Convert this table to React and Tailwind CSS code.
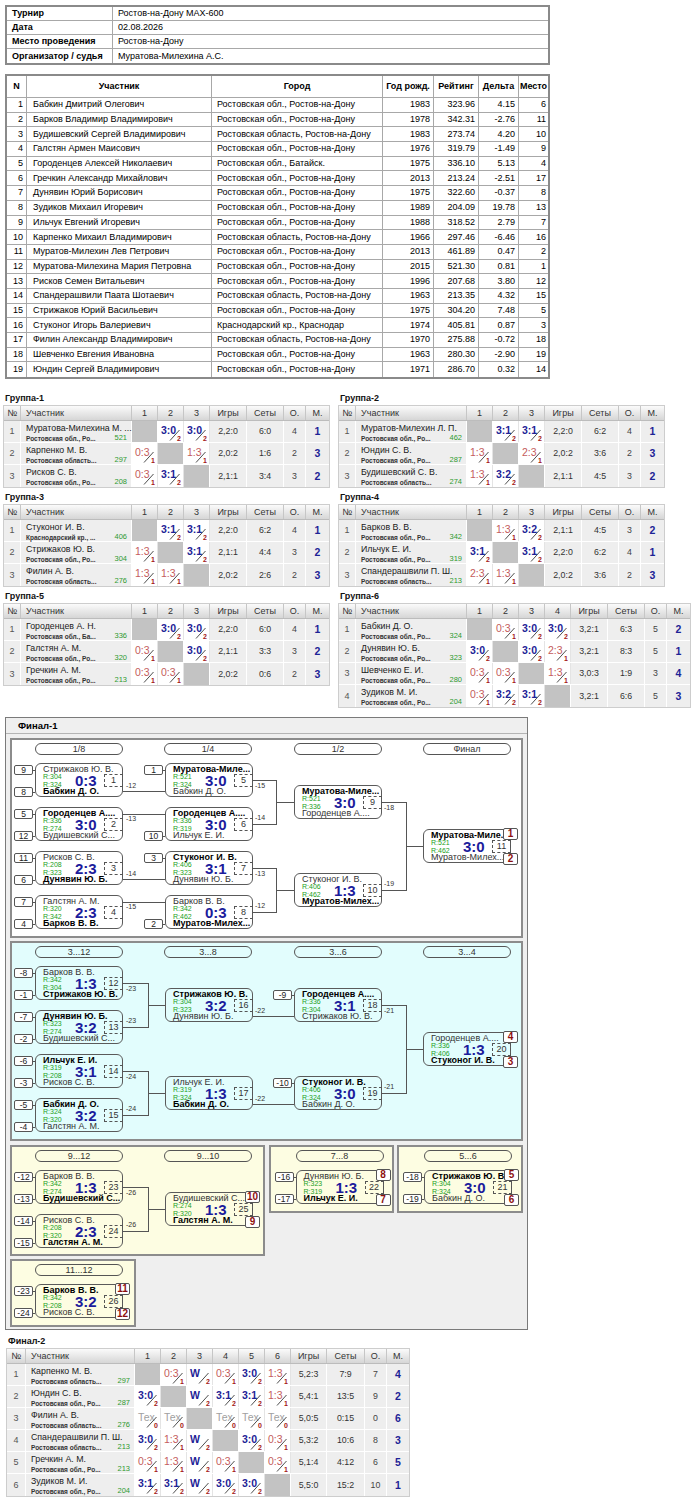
import React from 'react';

const players = [
  [1, 'Бабкин Дмитрий Олегович', 'Ростовская обл., Ростов-на-Дону', 1983, '323.96', '4.15', 6],
  [2, 'Барков Владимир Владимирович', 'Ростовская обл., Ростов-на-Дону', 1978, '342.31', '-2.76', 11],
  [3, 'Будишевский Сергей Владимирович', 'Ростовская область, Ростов-на-Дону', 1983, '273.74', '4.20', 10],
  [4, 'Галстян Армен Маисович', 'Ростовская обл., Ростов-на-Дону', 1976, '319.79', '-1.49', 9],
  [5, 'Городенцев Алексей Николаевич', 'Ростовская обл., Батайск.', 1975, '336.10', '5.13', 4],
  [6, 'Гречкин Александр Михайлович', 'Ростовская обл., Ростов-на-Дону', 2013, '213.24', '-2.51', 17],
  [7, 'Дунявин Юрий Борисович', 'Ростовская обл., Ростов-на-Дону', 1975, '322.60', '-0.37', 8],
  [8, 'Зудиков Михаил Игоревич', 'Ростовская обл., Ростов-на-Дону', 1989, '204.09', '19.78', 13],
  [9, 'Ильчук Евгений Игоревич', 'Ростовская обл., Ростов-на-Дону', 1988, '318.52', '2.79', 7],
  [10, 'Карпенко Михаил Владимирович', 'Ростовская область, Ростов-на-Дону', 1966, '297.46', '-6.46', 16],
  [11, 'Муратов-Милехин Лев Петрович', 'Ростовская обл., Ростов-на-Дону', 2013, '461.89', '0.47', 2],
  [12, 'Муратова-Милехина Мария Петровна', 'Ростовская обл., Ростов-на-Дону', 2015, '521.30', '0.81', 1],
  [13, 'Рисков Семен Витальевич', 'Ростовская обл., Ростов-на-Дону', 1996, '207.68', '3.80', 12],
  [14, 'Спандерашвили Паата Шотаевич', 'Ростовская область, Ростов-на-Дону', 1963, '213.35', '4.32', 15],
  [15, 'Стрижаков Юрий Васильевич', 'Ростовская обл., Ростов-на-Дону', 1975, '304.20', '7.48', 5],
  [16, 'Стуконог Игорь Валериевич', 'Краснодарский кр., Краснодар', 1974, '405.81', '0.87', 3],
  [17, 'Филин Александр Владимирович', 'Ростовская область, Ростов-на-Дону', 1970, '275.88', '-0.72', 18],
  [18, 'Шевченко Евгения Ивановна', 'Ростовская обл., Ростов-на-Дону', 1963, '280.30', '-2.90', 19],
  [19, 'Юндин Сергей Владимирович', 'Ростовская обл., Ростов-на-Дону', 1971, '286.70', '0.32', 14],
];

const RO = 'Ростовская обл., Ро...';
const RA = 'Ростовская область...';

const groups = [
  { t: 'Группа-1', n: 3, rows: [
    ['Муратова-Милехина М. ...', RO, 521, ['x', '3:0/2', '3:0/2'], '2,2:0', '6:0', 4, 1],
    ['Карпенко М. В.', RA, 297, ['0:3/1', 'x', '1:3/1'], '2,0:2', '1:6', 2, 3],
    ['Рисков С. В.', RO, 208, ['0:3/1', '3:1/2', 'x'], '2,1:1', '3:4', 3, 2],
  ] },
  { t: 'Группа-2', n: 3, rows: [
    ['Муратов-Милехин Л. П.', RO, 462, ['x', '3:1/2', '3:1/2'], '2,2:0', '6:2', 4, 1],
    ['Юндин С. В.', RO, 287, ['1:3/1', 'x', '2:3/1'], '2,0:2', '3:6', 2, 3],
    ['Будишевский С. В.', RA, 274, ['1:3/1', '3:2/2', 'x'], '2,1:1', '4:5', 3, 2],
  ] },
  { t: 'Группа-3', n: 3, rows: [
    ['Стуконог И. В.', 'Краснодарский кр., ...', 406, ['x', '3:1/2', '3:1/2'], '2,2:0', '6:2', 4, 1],
    ['Стрижаков Ю. В.', RO, 304, ['1:3/1', 'x', '3:1/2'], '2,1:1', '4:4', 3, 2],
    ['Филин А. В.', RA, 276, ['1:3/1', '1:3/1', 'x'], '2,0:2', '2:6', 2, 3],
  ] },
  { t: 'Группа-4', n: 3, rows: [
    ['Барков В. В.', RO, 342, ['x', '1:3/1', '3:2/2'], '2,1:1', '4:5', 3, 2],
    ['Ильчук Е. И.', RO, 319, ['3:1/2', 'x', '3:1/2'], '2,2:0', '6:2', 4, 1],
    ['Спандерашвили П. Ш.', RA, 213, ['2:3/1', '1:3/1', 'x'], '2,0:2', '3:6', 2, 3],
  ] },
  { t: 'Группа-5', n: 3, rows: [
    ['Городенцев А. Н.', 'Ростовская обл., Ба...', 336, ['x', '3:0/2', '3:0/2'], '2,2:0', '6:0', 4, 1],
    ['Галстян А. М.', RO, 320, ['0:3/1', 'x', '3:0/2'], '2,1:1', '3:3', 3, 2],
    ['Гречкин А. М.', RO, 213, ['0:3/1', '0:3/1', 'x'], '2,0:2', '0:6', 2, 3],
  ] },
  { t: 'Группа-6', n: 4, rows: [
    ['Бабкин Д. О.', RO, 324, ['x', '0:3/1', '3:0/2', '3:0/2'], '3,2:1', '6:3', 5, 2],
    ['Дунявин Ю. Б.', RO, 323, ['3:0/2', 'x', '3:0/2', '2:3/1'], '3,2:1', '8:3', 5, 1],
    ['Шевченко Е. И.', RO, 280, ['0:3/1', '0:3/1', 'x', '1:3/1'], '3,0:3', '1:9', 3, 4],
    ['Зудиков М. И.', RO, 204, ['0:3/1', '3:2/2', '3:1/2', 'x'], '3,2:1', '6:6', 5, 3],
  ] },
];

const final2 = { t: 'Финал-2', n: 6, rows: [
  ['Карпенко М. В.', RA, 297, ['x', '0:3/1', 'W/2', '0:3/1', '3:0/2', '1:3/1'], '5,2:3', '7:9', 7, 4],
  ['Юндин С. В.', RO, 287, ['3:0/2', 'x', 'W/2', '3:1/2', '3:1/2', '1:3/1'], '5,4:1', '13:5', 9, 2],
  ['Филин А. В.', RA, 276, ['T/0', 'T/0', 'x', 'T/0', 'T/0', 'T/0'], '5,0:5', '0:15', 0, 6],
  ['Спандерашвили П. Ш.', RA, 213, ['3:0/2', '1:3/1', 'W/2', 'x', '3:0/2', '0:3/1'], '5,3:2', '10:6', 8, 3],
  ['Гречкин А. М.', RO, 213, ['0:3/1', '1:3/1', 'W/2', '0:3/1', 'x', '0:3/1'], '5,1:4', '4:12', 6, 5],
  ['Зудиков М. И.', RO, 204, ['3:1/2', '3:1/2', 'W/2', '3:0/2', '3:0/2', 'x'], '5,5:0', '15:2', 10, 1],
] };

const GCOLS = {
  3: 'grid-cols-[17px_111px_26px_26px_26px_37px_37px_22px_23px]',
  4: 'grid-cols-[17px_111px_26px_26px_26px_26px_37px_37px_22px_23px]',
  6: 'grid-cols-[19px_109px_26px_26px_26px_26px_26px_26px_36px_38px_22px_22px]',
};

const PCOLS = 'grid-cols-[20px_185px_171px_51px_45px_40px_29px]';

// сетка Финал-1, координаты в пикселях страницы
const panels = {
  main: {
    ox: 12, oy: 740,
    heads: [[35, 743, '1/8'], [164, 743, '1/4'], [294, 743, '1/2'], [423, 743, 'Финал']],
    matches: [
      { x: 35, y: 763, a: 'Стрижаков Ю. В.', b: 'Бабкин Д. О.', w: 2, ra: 304, rb: 324, s: '0:3', n: 1, sa: '9', sb: '8' },
      { x: 35, y: 807, a: 'Городенцев А....', b: 'Будишевский С...', w: 1, ra: 336, rb: 274, s: '3:0', n: 2, sa: '5', sb: '12' },
      { x: 35, y: 851, a: 'Рисков С. В.', b: 'Дунявин Ю. Б.', w: 2, ra: 208, rb: 323, s: '2:3', n: 3, sa: '11', sb: '6' },
      { x: 35, y: 895, a: 'Галстян А. М.', b: 'Барков В. В.', w: 2, ra: 320, rb: 342, s: '2:3', n: 4, sa: '7', sb: '4' },
      { x: 165, y: 763, a: 'Муратова-Миле...', b: 'Бабкин Д. О.', w: 1, ra: 521, rb: 324, s: '3:0', n: 5, sa: '1' },
      { x: 165, y: 807, a: 'Городенцев А....', b: 'Ильчук Е. И.', w: 1, ra: 336, rb: 319, s: '3:0', n: 6, sb: '10' },
      { x: 165, y: 851, a: 'Стуконог И. В.', b: 'Дунявин Ю. Б.', w: 1, ra: 406, rb: 323, s: '3:1', n: 7, sa: '3' },
      { x: 165, y: 895, a: 'Барков В. В.', b: 'Муратов-Милех...', w: 2, ra: 342, rb: 462, s: '0:3', n: 8, sb: '2' },
      { x: 294, y: 785, a: 'Муратова-Миле...', b: 'Городенцев А....', w: 1, ra: 521, rb: 336, s: '3:0', n: 9 },
      { x: 294, y: 873, a: 'Стуконог И. В.', b: 'Муратов-Милех...', w: 2, ra: 406, rb: 462, s: '1:3', n: 10 },
      { x: 423, y: 829, a: 'Муратова-Миле...', b: 'Муратов-Милех...', w: 1, ra: 521, rb: 462, s: '3:0', n: 11, pa: '1', pb: '2' },
    ],
    lines: [
      'M123 791H165', 'M123 814H165', 'M123 879H165', 'M123 902H165',
      'M253 780H276V824H253', 'M276 802H294',
      'M253 868H276V912H253', 'M276 890H294',
      'M382 802H406V890H382', 'M406 846H423',
    ],
    labels: [
      [126, 786, '-12'], [126, 819, '-13'], [126, 874, '-14'], [126, 907, '-15'],
      [255, 786, '-15'], [255, 818, '-14'], [255, 874, '-13'], [255, 906, '-12'],
      [384, 808, '-18'], [384, 884, '-19'],
    ],
  },
  cons: {
    ox: 12, oy: 943,
    heads: [[35, 946, '3...12'], [164, 946, '3...8'], [294, 946, '3...6'], [423, 946, '3...4']],
    matches: [
      { x: 35, y: 966, a: 'Барков В. В.', b: 'Стрижаков Ю. В.', w: 2, ra: 342, rb: 304, s: '1:3', n: 12, sa: '-8', sb: '-1' },
      { x: 35, y: 1010, a: 'Дунявин Ю. Б.', b: 'Будишевский С...', w: 1, ra: 323, rb: 274, s: '3:2', n: 13, sa: '-7', sb: '-2' },
      { x: 35, y: 1054, a: 'Ильчук Е. И.', b: 'Рисков С. В.', w: 1, ra: 319, rb: 208, s: '3:1', n: 14, sa: '-6', sb: '-3' },
      { x: 35, y: 1098, a: 'Бабкин Д. О.', b: 'Галстян А. М.', w: 1, ra: 324, rb: 320, s: '3:2', n: 15, sa: '-5', sb: '-4' },
      { x: 165, y: 988, a: 'Стрижаков Ю. В.', b: 'Дунявин Ю. Б.', w: 1, ra: 304, rb: 323, s: '3:2', n: 16 },
      { x: 165, y: 1076, a: 'Ильчук Е. И.', b: 'Бабкин Д. О.', w: 2, ra: 319, rb: 324, s: '1:3', n: 17 },
      { x: 294, y: 988, a: 'Городенцев А....', b: 'Стрижаков Ю. В.', w: 1, ra: 336, rb: 304, s: '3:1', n: 18, sa: '-9' },
      { x: 294, y: 1076, a: 'Стуконог И. В.', b: 'Бабкин Д. О.', w: 1, ra: 406, rb: 324, s: '3:0', n: 19, sa: '-10' },
      { x: 423, y: 1032, a: 'Городенцев А....', b: 'Стуконог И. В.', w: 2, ra: 336, rb: 406, s: '1:3', n: 20, pa: '4', pb: '3' },
    ],
    lines: [
      'M123 983H148V1027H123', 'M148 1005H165',
      'M123 1071H148V1115H123', 'M148 1093H165',
      'M253 1016H294', 'M253 1104H294',
      'M382 1005H406V1093H382', 'M406 1049H423',
    ],
    labels: [
      [126, 989, '-23'], [126, 1021, '-23'], [126, 1077, '-24'], [126, 1109, '-24'],
      [255, 1011, '-22'], [255, 1099, '-22'], [384, 1011, '-21'], [384, 1087, '-21'],
    ],
  },
  p912: {
    ox: 12, oy: 1147,
    heads: [[35, 1150, '9...12'], [164, 1150, '9...10']],
    matches: [
      { x: 35, y: 1170, a: 'Барков В. В.', b: 'Будишевский С...', w: 2, ra: 342, rb: 274, s: '1:3', n: 23, sa: '-12', sb: '-13' },
      { x: 35, y: 1214, a: 'Рисков С. В.', b: 'Галстян А. М.', w: 2, ra: 208, rb: 320, s: '2:3', n: 24, sa: '-14', sb: '-15' },
      { x: 165, y: 1192, a: 'Будишевский С...', b: 'Галстян А. М.', w: 2, ra: 274, rb: 320, s: '1:3', n: 25, pa: '10', pb: '9' },
    ],
    lines: ['M123 1187H148V1231H123', 'M148 1209H165'],
    labels: [[126, 1193, '-26'], [126, 1225, '-26']],
  },
  p78: {
    ox: 270, oy: 1147,
    heads: [[295, 1150, '7...8']],
    matches: [
      { x: 295, y: 1170, a: 'Дунявин Ю. Б.', b: 'Ильчук Е. И.', w: 2, ra: 323, rb: 319, s: '1:3', n: 22, sa: '-16', sb: '-17', pa: '8', pb: '7' },
    ],
    lines: [],
    labels: [],
  },
  p56: {
    ox: 399, oy: 1147,
    heads: [[424, 1150, '5...6']],
    matches: [
      { x: 424, y: 1170, a: 'Стрижаков Ю. В.', b: 'Бабкин Д. О.', w: 1, ra: 304, rb: 324, s: '3:0', n: 21, sa: '-18', sb: '-19', pa: '5', pb: '6' },
    ],
    lines: [],
    labels: [],
  },
  p1112: {
    ox: 12, oy: 1261,
    heads: [[35, 1264, '11...12']],
    matches: [
      { x: 35, y: 1284, a: 'Барков В. В.', b: 'Рисков С. В.', w: 1, ra: 342, rb: 208, s: '3:2', n: 26, sa: '-23', sb: '-24', pa: '11', pb: '12' },
    ],
    lines: [],
    labels: [],
  },
};

function InfoTable() {
  const rows = [
    ['Турнир', 'Ростов-на-Дону MAX-600'],
    ['Дата', '02.08.2026'],
    ['Место проведения', 'Ростов-на-Дону'],
    ['Организатор / судья', 'Муратова-Милехина А.С.'],
  ];
  return (
    <div className="ml-[5px] mt-[5px] w-[545px] border-2 border-[#8a8a8a]">
      {rows.map(([k, v], i) => (
        <div key={k} className={`grid grid-cols-[106px_1fr] h-[14px] ${i < 3 ? 'border-b border-[#a8a8a8]' : ''}`}>
          <div className="border-r border-[#a8a8a8] pl-[5px] flex items-center font-bold">{k}</div>
          <div className="pl-[5px] flex items-center">{v}</div>
        </div>
      ))}
    </div>
  );
}

function PlayersTable() {
  const heads = ['N', 'Участник', 'Город', 'Год рожд.', 'Рейтинг', 'Дельта', 'Место'];
  return (
    <div className="ml-[5px] mt-[9px] w-[545px] border-2 border-[#8a8a8a]">
      <div className={`grid ${PCOLS} h-[22px] border-b border-[#a8a8a8] font-bold`}>
        {heads.map((h, i) => (
          <div key={h} className={`flex items-center justify-center ${i < 6 ? 'border-r border-[#a8a8a8]' : ''}`}>{h}</div>
        ))}
      </div>
      {players.map((p, i) => (
        <div key={p[0]} className={`grid ${PCOLS} h-[14.7px] ${i < 18 ? 'border-b border-[#a8a8a8]' : ''}`}>
          <div className="border-r border-[#a8a8a8] flex items-center justify-end pr-[3px]">{p[0]}</div>
          <div className="border-r border-[#a8a8a8] flex items-center pl-[6px] whitespace-nowrap">{p[1]}</div>
          <div className="border-r border-[#a8a8a8] flex items-center pl-[5px] whitespace-nowrap">{p[2]}</div>
          <div className="border-r border-[#a8a8a8] flex items-center justify-end pr-[3px]">{p[3]}</div>
          <div className="border-r border-[#a8a8a8] flex items-center justify-end pr-[3px]">{p[4]}</div>
          <div className="border-r border-[#a8a8a8] flex items-center justify-end pr-[3px]">{p[5]}</div>
          <div className="flex items-center justify-end pr-[2px]">{p[6]}</div>
        </div>
      ))}
    </div>
  );
}

function ScoreCell({ v }) {
  if (v === 'x') return <div className="bg-[#c3c3c3] border-r border-white" />;
  const [s, p] = v.split('/');
  const tex = s === 'T';
  const win = p === '2';
  const color = tex ? 'text-[#a0a0a0]' : win ? 'text-[#1d2396] font-bold' : 'text-[#c45c5c]';
  return (
    <div className="relative bg-white border-r border-[#e4e4e4]">
      <span className={`absolute left-[3px] top-[3px] text-[10.5px] leading-[12px] whitespace-nowrap ${color}`}>{tex ? 'Тех' : s}</span>
      <svg className="absolute left-0 top-0" width="26" height="22">
        <line x1="12" y1="19.5" x2="21.5" y2="9" stroke="#3a3a3a" strokeWidth="0.9" />
      </svg>
      <span className="absolute right-[2px] top-[14px] text-[7px] leading-[8px] font-bold text-[#a31515]">{p}</span>
    </div>
  );
}

function GroupTable({ g }) {
  const heads = ['№', 'Участник', ...g.rows[0][3].map((_, i) => String(i + 1)), 'Игры', 'Сеты', 'О.', 'М.'];
  return (
    <div>
      <div className="h-[14px] pl-[2px] leading-[14px] font-bold text-[9px] text-[#111]">{g.t}</div>
      <div className="w-fit border border-[#cdcdcd]">
        <div className={`grid ${GCOLS[g.n]} h-[15px] bg-linear-to-b from-[#fbfbfb] to-[#d6d6d6] border-b border-[#bcbcbc] text-[#333]`}>
          {heads.map((h, i) => (
            <div key={i} className={`flex items-center ${i === 1 ? 'pl-[5px]' : 'justify-center'} ${i < heads.length - 1 ? 'border-r border-[#c6c6c6]' : ''}`}>{h}</div>
          ))}
        </div>
        {g.rows.map((r, ri) => (
          <div key={ri} className={`grid ${GCOLS[g.n]} h-[22px] bg-[#eeeeee] ${ri < g.rows.length - 1 ? 'border-b border-white' : ''}`}>
            <div className="flex items-center justify-center border-r border-white text-[9px] text-[#555]">{ri + 1}</div>
            <div className="relative border-r border-white">
              <div className="absolute left-[5px] top-[2px] text-[8.8px] leading-[11px] text-[#1a1a1a] whitespace-nowrap">{r[0]}</div>
              <div className="absolute left-[5px] top-[14px] text-[6.5px] leading-[7px] font-bold text-[#333] whitespace-nowrap">{r[1]}</div>
              <div className="absolute right-[4px] top-[13px] text-[7.5px] leading-[8px] text-[#2f9a2f]">{r[2]}</div>
            </div>
            {r[3].map((v, ci) => <ScoreCell key={ci} v={v} />)}
            <div className="flex items-center justify-center border-r border-white text-[8.8px] text-[#333]">{r[4]}</div>
            <div className="flex items-center justify-center border-r border-white text-[8.8px] text-[#333]">{r[5]}</div>
            <div className="flex items-center justify-center border-r border-white text-[8.8px] text-[#444]">{r[6]}</div>
            <div className="flex items-center justify-center text-[10.5px] font-bold text-[#1d2396]">{r[7]}</div>
          </div>
        ))}
      </div>
    </div>
  );
}

function Seed({ x, y, t, ox, oy }) {
  return (
    <div className="absolute flex items-center" style={{ left: x - ox, top: y - oy }}>
      <div className="w-[19px] h-[10px] rounded-[2px] border border-[#555] bg-white text-[8.5px] leading-[8px] text-center text-[#222]">{t}</div>
      <div className="w-[2px] h-px bg-[#555]" />
    </div>
  );
}

function Place({ x, y, t, ox, oy }) {
  return (
    <div
      className="absolute w-[15px] h-[12px] rounded-[2px] border border-[#555] bg-white text-[10px] leading-[10px] text-center font-bold text-[#8d0f0f]"
      style={{ left: x - ox, top: y - oy }}
    >
      {t}
    </div>
  );
}

function Match({ m, ox, oy }) {
  const nameA = m.w === 1 ? 'font-bold text-black' : 'text-[#333]';
  const nameB = m.w === 2 ? 'font-bold text-black' : 'text-[#333]';
  return (
    <>
      {m.pa && <div className="absolute w-px h-[13px] bg-[#555]" style={{ left: m.x + 87 - ox, top: m.y + 11 - oy }} />}
      <div className="absolute w-[88px] h-[34px] rounded-[6px] border border-[#5a5a5a]" style={{ left: m.x - ox, top: m.y - oy }}>
        <div className={`absolute left-[7px] top-0 text-[9px] leading-[11px] whitespace-nowrap ${nameA}`}>{m.a}</div>
        <div className="absolute left-[7px] top-[9px] text-[7px] leading-[8px] text-[#22a022]">R:{m.ra}</div>
        <div className="absolute left-[7px] top-[17px] text-[7px] leading-[8px] text-[#22a022]">R:{m.rb}</div>
        <div className="absolute left-[39px] top-[8px] text-[15px] leading-[17px] font-bold text-[#1c1c9c]">{m.s}</div>
        <div className="absolute left-[68px] top-[10px] w-[19px] h-[13px] border border-dashed border-[#555] text-[9px] leading-[11px] text-center text-[#333]">{m.n}</div>
        <div className={`absolute left-[7px] top-[22px] text-[9px] leading-[11px] whitespace-nowrap ${nameB}`}>{m.b}</div>
      </div>
      {m.sa && <Seed x={m.x - 21} y={m.y + 2} t={m.sa} ox={ox} oy={oy} />}
      {m.sb && <Seed x={m.x - 21} y={m.y + 24} t={m.sb} ox={ox} oy={oy} />}
      {m.pa && <Place x={m.x + 80} y={m.y - 1} t={m.pa} ox={ox} oy={oy} />}
      {m.pb && <Place x={m.x + 80} y={m.y + 24} t={m.pb} ox={ox} oy={oy} />}
    </>
  );
}

function Panel({ p, className }) {
  return (
    <div className={`relative border-2 border-[#8c8c8c] ${className}`}>
      <svg className="absolute left-0 top-0 w-full h-full overflow-visible">
        <g transform={`translate(${-p.ox} ${-p.oy})`} stroke="#555" fill="none" shapeRendering="crispEdges">
          {p.lines.map((d, i) => <path key={i} d={d} />)}
        </g>
      </svg>
      {p.heads.map(([x, y, t]) => (
        <div
          key={t}
          className="absolute w-[88px] h-[12px] rounded-full border border-[#555] text-[9px] leading-[10px] text-center text-[#333]"
          style={{ left: x - p.ox, top: y - p.oy }}
        >
          {t}
        </div>
      ))}
      {p.matches.map((m) => <Match key={m.n} m={m} ox={p.ox} oy={p.oy} />)}
      {p.labels.map(([x, y, t], i) => (
        <div key={i} className="absolute text-[7px] leading-[8px] text-[#333]" style={{ left: x - p.ox, top: y - p.oy - 4 }}>{t}</div>
      ))}
    </div>
  );
}

function Final1() {
  return (
    <div className="ml-[5px] mt-[9px] w-[523px] border border-[#7a7a7a] bg-[#efefef]">
      <div className="h-[16px] pl-[12px] flex items-center font-bold text-[9.5px] border-b border-[#b4b4b4]">Финал-1</div>
      <div className="px-[4px] pt-[4px] pb-[2px] flex flex-col gap-[3px]">
        <Panel p={panels.main} className="w-[513px] h-[200px] bg-white" />
        <Panel p={panels.cons} className="w-[513px] h-[200px] bg-[#e2fdfd]" />
        <div className="flex justify-between items-start mt-[1px]">
          <Panel p={panels.p912} className="w-[255px] h-[111px] bg-[#fdfde2]" />
          <Panel p={panels.p78} className="w-[125px] h-[68px] bg-[#fdfde2]" />
          <Panel p={panels.p56} className="w-[126px] h-[68px] bg-[#fdfde2]" />
        </div>
        <Panel p={panels.p1112} className="w-[126px] h-[68px] bg-[#fdfde2]" />
      </div>
    </div>
  );
}

export default function App() {
  return (
    <div className="w-[695px] min-h-[1500px] bg-white text-black text-[9px] leading-none font-['Liberation_Sans',Arial,sans-serif]">
      <InfoTable />
      <PlayersTable />
      <div className="grid grid-cols-[335px_auto] gap-y-[2px] pl-[3px] mt-[12px]">
        {groups.map((g) => <GroupTable key={g.t} g={g} />)}
      </div>
      <Final1 />
      <div className="pl-[6px] mt-[4px]">
        <GroupTable g={final2} />
      </div>
    </div>
  );
}
